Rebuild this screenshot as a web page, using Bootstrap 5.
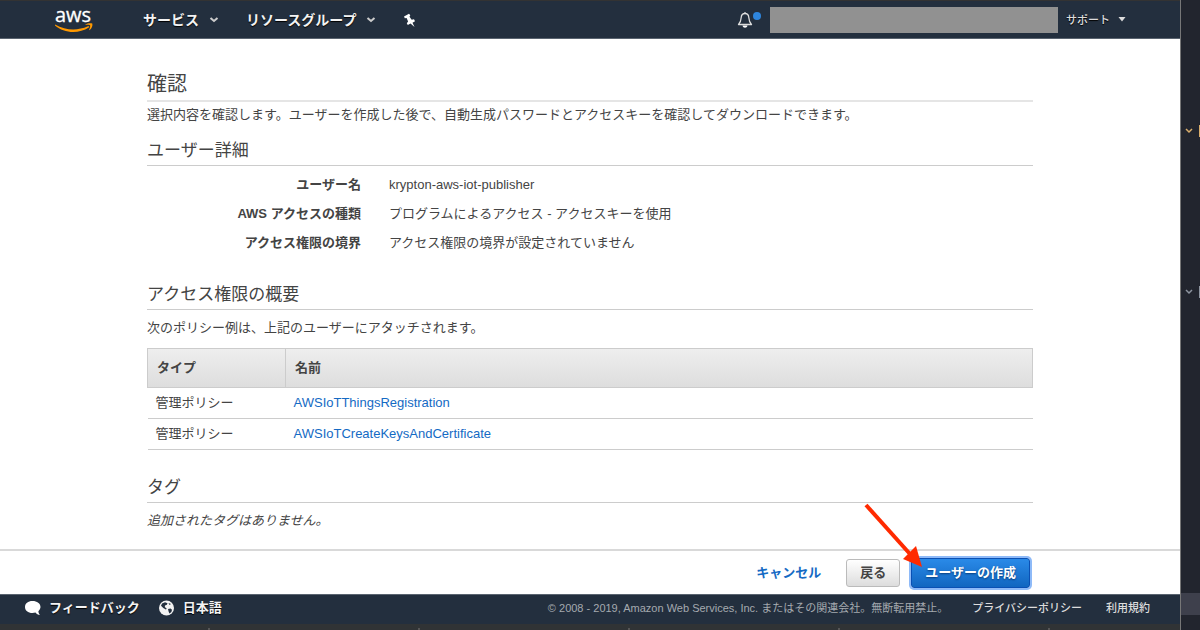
<!DOCTYPE html>
<html lang="ja">
<head>
<meta charset="utf-8">
<meta name="viewport" content="width=device-width, initial-scale=1">
<title>ユーザーの作成 - 確認</title>
<link href="https://cdn.jsdelivr.net/npm/bootstrap@5.3.0/dist/css/bootstrap.min.css" rel="stylesheet">
<style>
  body { font-family: "Liberation Sans", "Noto Sans CJK JP", sans-serif; font-size: 13px; line-height: 26px; color: #444; background: #fff; }
  a { color: #146ac4; text-decoration: none; }
  a:hover { text-decoration: underline; }
  svg { display: block; flex: none; }

  .console-nav { background: #232f3e; border-top: 1px solid #333; border-bottom: 1px solid #5a6470; height: 39px; padding-left: 54px; padding-right: 54px; }
  .console-nav button, .console-foot button { background: none; border: 0; padding: 0; color: #f3f3f3; font-weight: 700; display: flex; align-items: center; text-shadow: 0 1px 1px #000; white-space: nowrap; }
  .console-nav .menu-btn { font-size: 14px; gap: 10px; padding-top: 1px; }
  .nav-gap { margin-left: 27px; }
  .foot-gap { margin-left: 18px; }
  .console-nav .support-btn { font-size: 11px; font-weight: 500; color: #ddd; gap: 8px; margin-left: 8px; }
  .account-box { width: 288px; height: 26px; background: #919191; margin-left: 9px; }

  .review { width: 100%; max-width: 886px; padding-top: 30px; }
  .review h1 { font-size: 20px; line-height: 31px; font-weight: 400; margin: 0; border-bottom: 2px solid #e5e5e5; }
  .review h2 { font-size: 17px; line-height: 28px; font-weight: 400; margin: 24px 0 5px; border-bottom: 1px solid #ccc; }
  .review p { margin: 0; }
  .review .lead-in + h2 { margin-top: 9px; }
  .facts { display: grid; grid-template-columns: 214px 1fr; gap: 1px 28px; line-height: 28px; margin: 0; }
  .facts dt { text-align: right; }
  .facts dd { margin: 0; }
  .policies { margin: 7px 0 0; color: inherit; border-color: #ccc; --bs-table-bg: transparent; --bs-table-color: #444; }
  .policies th { padding: 6px 9px; border: 1px solid #ccc; }
  .policies thead { background: linear-gradient(#eee, #ddd); }
  .policies td { padding: 2px 8px; border-bottom: 1px solid #ccc; }
  .policies .kind { width: 138px; }

  .actions { border-top: 2px solid #d9d9d9; height: 45px; padding-right: 150px; }
  .actions .btn { font-size: 13px; font-weight: 700; line-height: 20px; border-radius: 3px; padding: 4px 13px; }
  .actions .btn-back { color: #444; border-color: #bbb; background: linear-gradient(#fff, #ddd); margin-left: 25px; line-height: 18px; }
  .btn-create { color: #fff; border-color: #0a50b4; background: linear-gradient(#2a8ae8, #1166c0); text-shadow: 0 1px 2px #063b7a; box-shadow: 0 0 0 2px #8ebaf8; margin-left: 11px; }
  .pointer-arrow { position: absolute; right: 107px; bottom: 20px; pointer-events: none; z-index: 2; }

  .console-foot { background: #232f3e; border-top: 1px solid #5a6470; height: 30px; padding-left: 24px; padding-right: 30px; padding-bottom: 3px; color: #a5aaaf; font-size: 11px; }
  .console-foot button { font-size: 13px; gap: 8px; }
  .console-foot a { color: #ddd; font-weight: 500; }
  .ruler { background: #303335; height: 6px; padding-top: 4px; }
  .ruler i { width: 210px; height: 2px; border-right: 2px solid #555; }

  .editor-edge { width: 20px; background: #22252e; border-left: 1px solid #777; }
  .fold { height: 12px; border-right: 1px solid; padding-left: 4px; display: flex; align-items: center; }
  .fold-a { margin-top: 125px; color: #d9ae6c; }
  .fold-b { margin-top: 149px; color: #8d949f; }
  .line-mark { background: #3e404c; height: 22px; margin-bottom: 15px; }
</style>
</head>
<body>
<div class="d-flex min-vh-100">
  <div class="d-flex flex-column flex-grow-1">
    <nav class="console-nav d-flex align-items-center" aria-label="コンソール">
      <a href="#" aria-label="aws">
        <svg width="41" height="30" viewBox="0 0 41 30" overflow="visible">
          <text x="1" y="17" font-family="Open Sans" font-size="20" fill="#fff" stroke="#fff" stroke-width=".3">aws</text>
          <path d="M1 19.500c11 6 22 6.500 33 1.800 1-.4 1.800.5.8 1.200C25 29 10 28.500 1 20.500z" fill="#f90"/>
          <path d="M31.500 19.300c2-1.300 5-1.400 6.800-.8.600 2-.6 5-2.600 6.500-.4.300-.8.100-.6-.3.700-1.600 1.300-3.400 1-4.500-1-.6-3-.5-4.400-.4-.4 0-.5-.3-.2-.5z" fill="#f90"/>
        </svg>
      </a>
      <button type="button" class="menu-btn ms-5">サービス
        <svg width="10" height="6" viewBox="0 0 10 6"><path d="M1.500 1l3.500 3 3.500-3" fill="none" stroke="#ccc" stroke-width="2"/></svg>
      </button>
      <button type="button" class="menu-btn nav-gap">リソースグループ
        <svg width="10" height="6" viewBox="0 0 10 6"><path d="M1.500 1l3.500 3 3.500-3" fill="none" stroke="#ccc" stroke-width="2"/></svg>
      </button>
      <button type="button" class="nav-gap" aria-label="ピン留め">
        <svg width="13" height="14" viewBox="0 0 13 14"><path d="M1 3.500L6 .8l1.300 1.400-.8 1.500 2.200 3 2.300-.4 1 2-2.500 1.500L11.500 14 7.500 10.600 4.800 12l-1-1.800 1.300-1.800L3.600 5 1.800 5.200z" fill="#fff"/></svg>
      </button>
      <button type="button" class="ms-auto" aria-label="お知らせ">
        <svg width="24" height="18" viewBox="0 0 24 18">
          <path d="M1.500 13.500c2-2 2.500-4 2.700-7C4.400 3.500 5.500 2.500 8 2.500s3.600 1 3.800 4c.2 3 .7 5 2.700 7zM8 1v2" fill="none" stroke="#ddd" stroke-width="1.300" stroke-linejoin="round"/>
          <path d="M5.500 14.500h5c-.5 3-4.500 3-5 0z" fill="#fff"/><circle cx="20" cy="5" r="4" fill="#2e86de"/>
        </svg>
      </button>
      <div class="account-box"></div>
      <button type="button" class="support-btn">サポート
        <svg width="8" height="5" viewBox="0 0 8 5"><path d="M.5 0h7L4 4.500z" fill="#ddd"/></svg>
      </button>
    </nav>

    <main class="review mx-auto flex-grow-1">
      <h1>確認</h1>
      <p class="lead-in">選択内容を確認します。ユーザーを作成した後で、自動生成パスワードとアクセスキーを確認してダウンロードできます。</p>

      <h2>ユーザー詳細</h2>
      <dl class="facts">
        <dt>ユーザー名</dt><dd>krypton-aws-iot-publisher</dd>
        <dt>AWS アクセスの種類</dt><dd>プログラムによるアクセス - アクセスキーを使用</dd>
        <dt>アクセス権限の境界</dt><dd>アクセス権限の境界が設定されていません</dd>
      </dl>

      <h2>アクセス権限の概要</h2>
      <p>次のポリシー例は、上記のユーザーにアタッチされます。</p>
      <table class="table policies">
        <thead><tr><th class="kind" scope="col">タイプ</th><th scope="col">名前</th></tr></thead>
        <tbody>
          <tr><td>管理ポリシー</td><td><a href="#">AWSIoTThingsRegistration</a></td></tr>
          <tr><td>管理ポリシー</td><td><a href="#">AWSIoTCreateKeysAndCertificate</a></td></tr>
        </tbody>
      </table>

      <h2>タグ</h2>
      <p class="fst-italic">追加されたタグはありません。</p>
    </main>

    <div class="actions d-flex align-items-center justify-content-end">
      <a href="#" class="fw-bold">キャンセル</a>
      <button type="button" class="btn btn-back">戻る</button>
      <div class="position-relative">
        <button type="button" class="btn btn-create">ユーザーの作成</button>
        <svg class="pointer-arrow" width="60" height="66" viewBox="0 0 60 66"><path d="M3 3l44 49" stroke="#ff2a00" stroke-width="4"/><path d="M59 65L40 57l13-13z" fill="#ff2a00"/></svg>
      </div>
    </div>

    <footer class="console-foot d-flex align-items-center">
      <button type="button">
        <svg width="17" height="16" viewBox="0 0 17 16"><path d="M8.500 1C4 1 1 3.500 1 7s3 6 7.500 6c1 0 2 0 3-.4 1 1.400 2.500 2.400 4.500 2.400-1-1-1.600-2.500-1.600-3.800C15.500 10 16.500 8.500 16.500 7c0-3.500-3.500-6-8-6z" fill="#fff"/></svg>
        フィードバック</button>
      <button type="button" class="foot-gap">
        <svg width="17" height="16" viewBox="0 0 17 16"><circle cx="8.500" cy="8" r="7.500" fill="#f3f3f3"/><path d="M4 3.500L7 2.200l2.500 1-.6 1.600L7 5.500 6.800 7l2 1.800-1 .7-2.500-1.600L3 5.800zM10.500 3l2.500 1-1.500 1zM10 9l2.500-.5 1.500 1.200-.6 2.300-2 1.500-.8-2z" fill="#232f3e"/></svg>
        日本語</button>
      <span class="ms-auto">© 2008 - 2019, Amazon Web Services, Inc. またはその関連会社。無断転用禁止。</span>
      <a href="#" class="ms-4">プライバシーポリシー</a>
      <a href="#" class="ms-4">利用規約</a>
    </footer>
    <div class="ruler d-flex overflow-hidden"><i></i><i></i><i></i><i></i><i></i></div>
  </div>

  <aside class="editor-edge d-flex flex-column flex-shrink-0">
    <div class="fold fold-a"><svg width="8" height="6" viewBox="0 0 8 6"><path d="M1 1l3 3 3-3" fill="none" stroke="currentColor" stroke-width="1.500"/></svg></div>
    <div class="fold fold-b"><svg width="8" height="6" viewBox="0 0 8 6"><path d="M1 1l3 3 3-3" fill="none" stroke="currentColor" stroke-width="1.500"/></svg></div>
    <div class="line-mark mt-auto"></div>
  </aside>
</div>
<script src="https://cdn.jsdelivr.net/npm/bootstrap@5.3.0/dist/js/bootstrap.bundle.min.js"></script>
</body>
</html>
